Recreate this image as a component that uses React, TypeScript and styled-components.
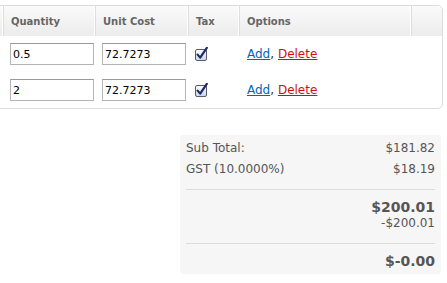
import styled, { createGlobalStyle } from 'styled-components';
import { FC } from 'react';

const GlobalStyle = createGlobalStyle`
	body {
		margin: 0;
		background: #fff;
		font-family: 'DejaVu Sans', Verdana, sans-serif;
		overflow: hidden;
	}
`;

interface IItem {
	quantity: string;
	cost: string;
	tax: boolean;
}

const items: IItem[] = [
	{ quantity: '0.5', cost: '72.7273', tax: true },
	{ quantity: '2', cost: '72.7273', tax: true },
];

const CheckMark: FC = () => (
	<svg width='14' height='14' viewBox='0 0 14 14'>
		<defs>
			<linearGradient id='cb' x1='0' y1='0' x2='0' y2='1'>
				<stop offset='0' stopColor='#ffffff' />
				<stop offset='1' stopColor='#c9d4e6' />
			</linearGradient>
		</defs>
		<rect x='0.5' y='2.5' width='11' height='11' rx='1.5' fill='url(#cb)' stroke='#5a5a6a' />
		<path d='M2.6 7.6 L5.2 10.6 L11.8 0.8' fill='none' stroke='#1c2b6b' strokeWidth='2.2' strokeLinecap='round' strokeLinejoin='round' />
	</svg>
);

const App: FC = () => {
	return (
		<>
			<GlobalStyle />
			<Page>
				<Table>
					<HeadCell />
					<HeadCell>Quantity</HeadCell>
					<HeadCell>Unit Cost</HeadCell>
					<HeadCell>Tax</HeadCell>
					<HeadCell>Options</HeadCell>
					<HeadCell $last />
					{items.map((item, i) => (
						<Row key={i}>
							<Cell />
							<Cell>
								<Input defaultValue={item.quantity} />
							</Cell>
							<Cell>
								<Input defaultValue={item.cost} />
							</Cell>
							<Cell>{item.tax && <CheckMark />}</Cell>
							<Cell>
								<Options>
									<Link href='#'>Add</Link>,{' '}
									<Link href='#' $danger>
										Delete
									</Link>
								</Options>
							</Cell>
							<Cell />
						</Row>
					))}
				</Table>
				<Totals>
					<Line>
						<span>Sub Total:</span>
						<span>$181.82</span>
					</Line>
					<Line>
						<span>GST (10.0000%)</span>
						<span>$18.19</span>
					</Line>
					<Divider />
					<Big>$200.01</Big>
					<Small>-$200.01</Small>
					<Divider $wide />
					<Big>$-0.00</Big>
				</Totals>
			</Page>
		</>
	);
};

const Page = styled.div`
	width: 447px;
	padding-top: 5px;
`;

const Table = styled.div`
	display: grid;
	grid-template-columns: 23px 92px 93px 51px 172px 30px;
	width: 461px;
	margin-left: -20px;
	border: 1px solid #dcdcdc;
	border-radius: 0 5px 5px 0;
	overflow: hidden;
	background: #fff;
`;

const HeadCell = styled.div<{ $last?: boolean }>`
	height: 30px;
	display: flex;
	align-items: center;
	padding-left: 7px;
	font-size: 10px;
	font-weight: bold;
	color: #666;
	background: linear-gradient(#fafafa, #ececec);
	border-right: ${p => (p.$last ? 'none' : '1px solid #dedede')};
	box-shadow: ${p => (p.$last ? 'none' : 'inset -1px 0 0 #fff')};
`;

const Row = styled.div`
	display: contents;
`;

const Cell = styled.div`
	height: 36px;
	display: flex;
	align-items: center;
	padding-left: 6px;
	font-size: 12px;
	color: #333;
`;

const Options = styled.span`
	font-size: 12px;
	color: #333;
	padding-left: 1px;
`;

const Input = styled.input`
	width: 84px;
	height: 22px;
	box-sizing: border-box;
	border: 1px solid #b4b4b4;
	border-top-color: #9a9a9a;
	padding: 1px 2px 0;
	font-family: 'DejaVu Sans', Verdana, sans-serif;
	font-size: 11px;
	color: #000;
	background: #fff;
	outline: none;
`;

const Link = styled.a<{ $danger?: boolean }>`
	color: ${p => (p.$danger ? '#cc1111' : '#0066bb')};
	text-decoration: underline;
`;

const Totals = styled.div`
	width: 261px;
	margin: 26px 0 0 180px;
	padding: 3px 6px 4px;
	box-sizing: border-box;
	background: #f6f6f6;
	border-radius: 3px;
	color: #555;
`;

const Line = styled.div`
	display: flex;
	justify-content: space-between;
	font-size: 12px;
	line-height: 21px;
`;

const Divider = styled.div<{ $wide?: boolean }>`
	border-top: 1px solid #dcdcdc;
	margin: ${p => (p.$wide ? '12px 0 8px' : '9px 0 8px')};
`;

const Big = styled.div`
	text-align: right;
	font-size: 14px;
	font-weight: bold;
	line-height: 18px;
	color: #555;
`;

const Small = styled.div`
	text-align: right;
	font-size: 12px;
	line-height: 15px;
`;

export default App;
